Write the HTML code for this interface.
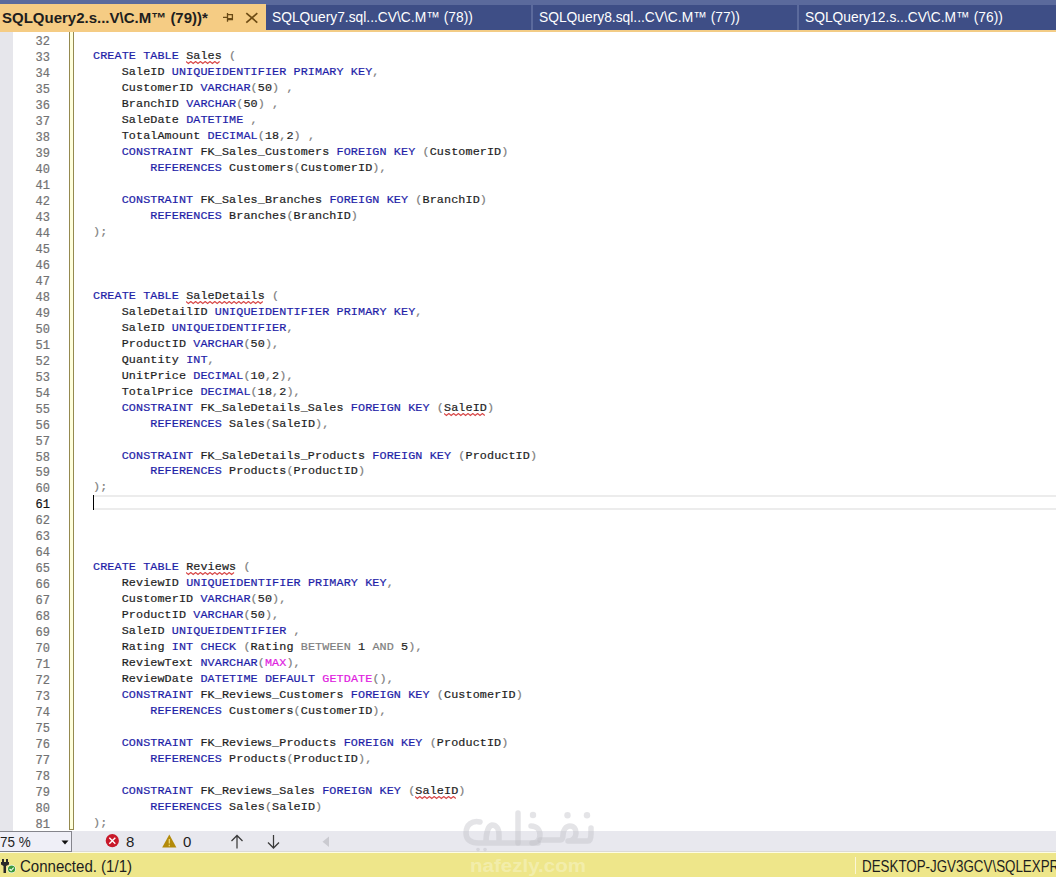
<!DOCTYPE html>
<html><head><meta charset="utf-8">
<style>
*{margin:0;padding:0;box-sizing:border-box}
html,body{width:1056px;height:877px;overflow:hidden;background:#fff}
body{position:relative;font-family:"Liberation Sans",sans-serif}
.abs{position:absolute}
#band{left:0;top:0;width:1056px;height:32px;background:#5B6A9C}
#uline{left:0;top:30px;width:1056px;height:2px;background:#F3CC86}
.tab{position:absolute;top:5px;height:25px;background:#3E4E86;color:#fff;white-space:nowrap;overflow:hidden}
.tab span{position:absolute;left:0;top:0;font-size:15px;line-height:25px;transform-origin:0 0;display:block}
#t1{left:0;top:4px;height:28px;width:266px;background:#F5CC84;color:#1E1E1E}
#t1 span{left:2px;top:1px;font-weight:bold;transform:scaleX(1.0)}
#t2{left:266px;width:265px}
#t3{left:533px;width:264px}
#t4{left:799px;width:257px}
#t2 span,#t3 span,#t4 span{left:6px;top:-1px;transform:scaleX(0.92)}
#editor{left:0;top:32px;width:1056px;height:799px;background:#fff;overflow:hidden}
#lmargin{left:0;top:0;width:13px;height:799px;background:#E6E6EB}
.ln,.cl{position:absolute;font-family:"Liberation Mono",monospace;font-size:11.75px;letter-spacing:0.11px;line-height:16px;height:16px;white-space:pre;-webkit-text-stroke:0.2px currentColor}
.ln{left:13px;width:37px;text-align:right;color:#727272;margin-top:2px;font-size:12px;letter-spacing:0}
.ln.cur{color:#111}
.cl{left:93px;color:#1E1E1E}
.cl b{font-weight:normal}
.k{color:#1E1EA8}
.g{color:#808080}
.f{color:#E020E0}
.cl i{font-style:normal}
#chg{left:69px;top:-2px;width:5px;height:800px;border:1px solid #958A50;background:#FFFFDC}
#curline{left:93px;width:963px;height:15px;border-top:2px solid #ECECEC;border-bottom:2px solid #ECECEC}
#caret{left:93px;width:1px;height:15px;background:#000}
#toolbar{left:0;top:831px;width:1056px;height:21px;background:#E8E8EE;border-bottom:1px solid #DCDAD6}
#zoom{left:-2px;top:831px;width:74px;height:21px;background:#EFEFF7;border:1px solid #85858C}
#zoom span{position:absolute;left:1px;top:1px;font-size:14px;line-height:18px;color:#1E1E1E;transform:scaleX(0.96);transform-origin:0 0}
#status{left:0;top:852px;width:1056px;height:25px;background:#EEE68A;border-top:1px solid #FDFDE6}
.st{position:absolute;font-size:15px;color:#1E1E1E;white-space:nowrap;line-height:18px}
</style></head><body>
<div id="band" class="abs"></div>
<div id="uline" class="abs"></div>
<div id="t1" class="tab"><span>SQLQuery2.s...V\C.M™ (79))*</span>
<svg class="abs" style="left:0;top:0" width="266" height="28">
 <g fill="none" stroke="#6A4A14" stroke-width="1.3">
  <path d="M223 13.4h4.5M227.5 9v8.8M228 10.6h4.4v5h-4.4" />
  <path d="M242.3 9.2l11 9.4M253.3 9.2l-11 9.4" stroke-width="1.7" stroke="#6E4C14" transform="translate(4,0)"/>
 </g>
 <path d="M228 14h5v2h-5z" fill="#6A4A14"/>
</svg>
</div>
<div id="t2" class="tab"><span>SQLQuery7.sql...CV\C.M™ (78))</span></div>
<div id="t3" class="tab"><span>SQLQuery8.sql...CV\C.M™ (77))</span></div>
<div id="t4" class="tab"><span>SQLQuery12.s...CV\C.M™ (76))</span></div>
<div id="editor" class="abs">
  <div id="lmargin" class="abs"></div>
  <div id="chg" class="abs"></div>
<div class="ln" style="top:0.02px">32</div>
<div class="ln" style="top:16.00px">33</div>
<div class="ln" style="top:31.98px">34</div>
<div class="ln" style="top:47.96px">35</div>
<div class="ln" style="top:63.94px">36</div>
<div class="ln" style="top:79.92px">37</div>
<div class="ln" style="top:95.90px">38</div>
<div class="ln" style="top:111.88px">39</div>
<div class="ln" style="top:127.86px">40</div>
<div class="ln" style="top:143.84px">41</div>
<div class="ln" style="top:159.82px">42</div>
<div class="ln" style="top:175.80px">43</div>
<div class="ln" style="top:191.78px">44</div>
<div class="ln" style="top:207.76px">45</div>
<div class="ln" style="top:223.74px">46</div>
<div class="ln" style="top:239.72px">47</div>
<div class="ln" style="top:255.70px">48</div>
<div class="ln" style="top:271.68px">49</div>
<div class="ln" style="top:287.66px">50</div>
<div class="ln" style="top:303.64px">51</div>
<div class="ln" style="top:319.62px">52</div>
<div class="ln" style="top:335.60px">53</div>
<div class="ln" style="top:351.58px">54</div>
<div class="ln" style="top:367.56px">55</div>
<div class="ln" style="top:383.54px">56</div>
<div class="ln" style="top:399.52px">57</div>
<div class="ln" style="top:415.50px">58</div>
<div class="ln" style="top:431.48px">59</div>
<div class="ln" style="top:447.46px">60</div>
<div class="ln cur" style="top:463.44px">61</div>
<div class="ln" style="top:479.42px">62</div>
<div class="ln" style="top:495.40px">63</div>
<div class="ln" style="top:511.38px">64</div>
<div class="ln" style="top:527.36px">65</div>
<div class="ln" style="top:543.34px">66</div>
<div class="ln" style="top:559.32px">67</div>
<div class="ln" style="top:575.30px">68</div>
<div class="ln" style="top:591.28px">69</div>
<div class="ln" style="top:607.26px">70</div>
<div class="ln" style="top:623.24px">71</div>
<div class="ln" style="top:639.22px">72</div>
<div class="ln" style="top:655.20px">73</div>
<div class="ln" style="top:671.18px">74</div>
<div class="ln" style="top:687.16px">75</div>
<div class="ln" style="top:703.14px">76</div>
<div class="ln" style="top:719.12px">77</div>
<div class="ln" style="top:735.10px">78</div>
<div class="ln" style="top:751.08px">79</div>
<div class="ln" style="top:767.06px">80</div>
<div class="ln" style="top:783.04px">81</div>
<svg class="abs" style="left:186.08px;top:29.00px" width="38" height="4"><polyline points="0.00,0.5 2.40,2.5 4.80,0.5 7.20,2.5 9.60,0.5 12.00,2.5 14.40,0.5 16.80,2.5 19.20,0.5 21.60,2.5 24.00,0.5 26.40,2.5 28.80,0.5 31.20,2.5 33.60,0.5" fill="none" stroke="#D84A4A" stroke-width="1.2"/></svg>
<svg class="abs" style="left:186.08px;top:268.70px" width="81" height="4"><polyline points="0.00,0.5 2.40,2.5 4.80,0.5 7.20,2.5 9.60,0.5 12.00,2.5 14.40,0.5 16.80,2.5 19.20,0.5 21.60,2.5 24.00,0.5 26.40,2.5 28.80,0.5 31.20,2.5 33.60,0.5 36.00,2.5 38.40,0.5 40.80,2.5 43.20,0.5 45.60,2.5 48.00,0.5 50.40,2.5 52.80,0.5 55.20,2.5 57.60,0.5 60.00,2.5 62.40,0.5 64.80,2.5 67.20,0.5 69.60,2.5 72.00,0.5 74.40,2.5 76.80,0.5" fill="none" stroke="#D84A4A" stroke-width="1.2"/></svg>
<svg class="abs" style="left:443.84px;top:380.56px" width="45" height="4"><polyline points="0.00,0.5 2.40,2.5 4.80,0.5 7.20,2.5 9.60,0.5 12.00,2.5 14.40,0.5 16.80,2.5 19.20,0.5 21.60,2.5 24.00,0.5 26.40,2.5 28.80,0.5 31.20,2.5 33.60,0.5 36.00,2.5 38.40,0.5 40.80,2.5" fill="none" stroke="#D84A4A" stroke-width="1.2"/></svg>
<svg class="abs" style="left:186.08px;top:540.36px" width="52" height="4"><polyline points="0.00,0.5 2.40,2.5 4.80,0.5 7.20,2.5 9.60,0.5 12.00,2.5 14.40,0.5 16.80,2.5 19.20,0.5 21.60,2.5 24.00,0.5 26.40,2.5 28.80,0.5 31.20,2.5 33.60,0.5 36.00,2.5 38.40,0.5 40.80,2.5 43.20,0.5 45.60,2.5 48.00,0.5" fill="none" stroke="#D84A4A" stroke-width="1.2"/></svg>
<svg class="abs" style="left:415.20px;top:764.08px" width="45" height="4"><polyline points="0.00,0.5 2.40,2.5 4.80,0.5 7.20,2.5 9.60,0.5 12.00,2.5 14.40,0.5 16.80,2.5 19.20,0.5 21.60,2.5 24.00,0.5 26.40,2.5 28.80,0.5 31.20,2.5 33.60,0.5 36.00,2.5 38.40,0.5 40.80,2.5" fill="none" stroke="#D84A4A" stroke-width="1.2"/></svg>
<div id="curline" class="abs" style="top:462.94px"></div>
<div id="caret" class="abs" style="top:463.44px"></div>
<div class="cl" style="top:16.00px"><b class="k">CREATE</b> <b class="k">TABLE</b> <i class="sq">Sales</i> <b class="g">(</b></div>
<div class="cl" style="top:31.98px">    <i>SaleID</i> <b class="k">UNIQUEIDENTIFIER</b> <b class="k">PRIMARY</b> <b class="k">KEY</b><b class="g">,</b></div>
<div class="cl" style="top:47.96px">    <i>CustomerID</i> <b class="k">VARCHAR</b><b class="g">(</b><i>50</i><b class="g">)</b> <b class="g">,</b></div>
<div class="cl" style="top:63.94px">    <i>BranchID</i> <b class="k">VARCHAR</b><b class="g">(</b><i>50</i><b class="g">)</b> <b class="g">,</b></div>
<div class="cl" style="top:79.92px">    <i>SaleDate</i> <b class="k">DATETIME</b> <b class="g">,</b></div>
<div class="cl" style="top:95.90px">    <i>TotalAmount</i> <b class="k">DECIMAL</b><b class="g">(</b><i>18</i><b class="g">,</b><i>2</i><b class="g">)</b> <b class="g">,</b></div>
<div class="cl" style="top:111.88px">    <b class="k">CONSTRAINT</b> <i>FK_Sales_Customers</i> <b class="k">FOREIGN</b> <b class="k">KEY</b> <b class="g">(</b><i>CustomerID</i><b class="g">)</b></div>
<div class="cl" style="top:127.86px">        <b class="k">REFERENCES</b> <i>Customers</i><b class="g">(</b><i>CustomerID</i><b class="g">)</b><b class="g">,</b></div>
<div class="cl" style="top:159.82px">    <b class="k">CONSTRAINT</b> <i>FK_Sales_Branches</i> <b class="k">FOREIGN</b> <b class="k">KEY</b> <b class="g">(</b><i>BranchID</i><b class="g">)</b></div>
<div class="cl" style="top:175.80px">        <b class="k">REFERENCES</b> <i>Branches</i><b class="g">(</b><i>BranchID</i><b class="g">)</b></div>
<div class="cl" style="top:191.78px"><b class="g">)</b><b class="g">;</b></div>
<div class="cl" style="top:255.70px"><b class="k">CREATE</b> <b class="k">TABLE</b> <i class="sq">SaleDetails</i> <b class="g">(</b></div>
<div class="cl" style="top:271.68px">    <i>SaleDetailID</i> <b class="k">UNIQUEIDENTIFIER</b> <b class="k">PRIMARY</b> <b class="k">KEY</b><b class="g">,</b></div>
<div class="cl" style="top:287.66px">    <i>SaleID</i> <b class="k">UNIQUEIDENTIFIER</b><b class="g">,</b></div>
<div class="cl" style="top:303.64px">    <i>ProductID</i> <b class="k">VARCHAR</b><b class="g">(</b><i>50</i><b class="g">)</b><b class="g">,</b></div>
<div class="cl" style="top:319.62px">    <i>Quantity</i> <b class="k">INT</b><b class="g">,</b></div>
<div class="cl" style="top:335.60px">    <i>UnitPrice</i> <b class="k">DECIMAL</b><b class="g">(</b><i>10</i><b class="g">,</b><i>2</i><b class="g">)</b><b class="g">,</b></div>
<div class="cl" style="top:351.58px">    <i>TotalPrice</i> <b class="k">DECIMAL</b><b class="g">(</b><i>18</i><b class="g">,</b><i>2</i><b class="g">)</b><b class="g">,</b></div>
<div class="cl" style="top:367.56px">    <b class="k">CONSTRAINT</b> <i>FK_SaleDetails_Sales</i> <b class="k">FOREIGN</b> <b class="k">KEY</b> <b class="g">(</b><i class="sq">SaleID</i><b class="g">)</b></div>
<div class="cl" style="top:383.54px">        <b class="k">REFERENCES</b> <i>Sales</i><b class="g">(</b><i>SaleID</i><b class="g">)</b><b class="g">,</b></div>
<div class="cl" style="top:415.50px">    <b class="k">CONSTRAINT</b> <i>FK_SaleDetails_Products</i> <b class="k">FOREIGN</b> <b class="k">KEY</b> <b class="g">(</b><i>ProductID</i><b class="g">)</b></div>
<div class="cl" style="top:431.48px">        <b class="k">REFERENCES</b> <i>Products</i><b class="g">(</b><i>ProductID</i><b class="g">)</b></div>
<div class="cl" style="top:447.46px"><b class="g">)</b><b class="g">;</b></div>
<div class="cl" style="top:527.36px"><b class="k">CREATE</b> <b class="k">TABLE</b> <i class="sq">Reviews</i> <b class="g">(</b></div>
<div class="cl" style="top:543.34px">    <i>ReviewID</i> <b class="k">UNIQUEIDENTIFIER</b> <b class="k">PRIMARY</b> <b class="k">KEY</b><b class="g">,</b></div>
<div class="cl" style="top:559.32px">    <i>CustomerID</i> <b class="k">VARCHAR</b><b class="g">(</b><i>50</i><b class="g">)</b><b class="g">,</b></div>
<div class="cl" style="top:575.30px">    <i>ProductID</i> <b class="k">VARCHAR</b><b class="g">(</b><i>50</i><b class="g">)</b><b class="g">,</b></div>
<div class="cl" style="top:591.28px">    <i>SaleID</i> <b class="k">UNIQUEIDENTIFIER</b> <b class="g">,</b></div>
<div class="cl" style="top:607.26px">    <i>Rating</i> <b class="k">INT</b> <b class="k">CHECK</b> <b class="g">(</b><i>Rating</i> <b class="g">BETWEEN</b> <i>1</i> <b class="g">AND</b> <i>5</i><b class="g">)</b><b class="g">,</b></div>
<div class="cl" style="top:623.24px">    <i>ReviewText</i> <b class="k">NVARCHAR</b><b class="g">(</b><b class="f">MAX</b><b class="g">)</b><b class="g">,</b></div>
<div class="cl" style="top:639.22px">    <i>ReviewDate</i> <b class="k">DATETIME</b> <b class="k">DEFAULT</b> <b class="f">GETDATE</b><b class="g">(</b><b class="g">)</b><b class="g">,</b></div>
<div class="cl" style="top:655.20px">    <b class="k">CONSTRAINT</b> <i>FK_Reviews_Customers</i> <b class="k">FOREIGN</b> <b class="k">KEY</b> <b class="g">(</b><i>CustomerID</i><b class="g">)</b></div>
<div class="cl" style="top:671.18px">        <b class="k">REFERENCES</b> <i>Customers</i><b class="g">(</b><i>CustomerID</i><b class="g">)</b><b class="g">,</b></div>
<div class="cl" style="top:703.14px">    <b class="k">CONSTRAINT</b> <i>FK_Reviews_Products</i> <b class="k">FOREIGN</b> <b class="k">KEY</b> <b class="g">(</b><i>ProductID</i><b class="g">)</b></div>
<div class="cl" style="top:719.12px">        <b class="k">REFERENCES</b> <i>Products</i><b class="g">(</b><i>ProductID</i><b class="g">)</b><b class="g">,</b></div>
<div class="cl" style="top:751.08px">    <b class="k">CONSTRAINT</b> <i>FK_Reviews_Sales</i> <b class="k">FOREIGN</b> <b class="k">KEY</b> <b class="g">(</b><i class="sq">SaleID</i><b class="g">)</b></div>
<div class="cl" style="top:767.06px">        <b class="k">REFERENCES</b> <i>Sales</i><b class="g">(</b><i>SaleID</i><b class="g">)</b></div>
<div class="cl" style="top:783.04px"><b class="g">)</b><b class="g">;</b></div>
</div>
<div id="toolbar" class="abs"></div>
<div id="zoom" class="abs"><span>75 %</span>
 <svg class="abs" style="left:0;top:0" width="74" height="21"><path d="M62.5 8.5h7l-3.5 4z" fill="#111"/></svg>
</div>
<svg class="abs" style="left:0;top:831px" width="400" height="21">
 <circle cx="112.3" cy="9.7" r="6.6" fill="#C8192A"/>
 <path d="M109.3 6.7l6 6M115.3 6.7l-6 6" stroke="#fff" stroke-width="1.4"/>
 <path d="M169.3 3.6l7.1 13h-14.2z" fill="#B38A0A"/>
 <path d="M169.3 8v4.6M169.3 13.8v1.4" stroke="#F0DC7C" stroke-width="1.2"/>
 <path d="M237 17.5V4.5M231.5 10l5.5-5.5 5.5 5.5" stroke="#3A3A3A" stroke-width="1.25" fill="none"/>
 <path d="M273.5 4v13M268 11.5l5.5 5.5 5.5-5.5" stroke="#3A3A3A" stroke-width="1.25" fill="none"/>
 <path d="M329 5.5v10.5l-6.5-5.25z" fill="#CACAD0"/>
</svg>
<div class="st" style="left:126px;top:833px;font-size:15px">8</div>
<div class="st" style="left:183px;top:833px;font-size:15px">0</div>
<div id="status" class="abs"></div>
<svg class="abs" style="left:0;top:852px" width="20" height="25">
 <path d="M2 7h2v3H2zM6 7h2v3H6z" fill="#2A2A2A"/>
 <path d="M1 10h8v2.5L6 14v7H3.5v-7L1 12.5z" fill="#2A2A2A"/>
 <circle cx="11.6" cy="17" r="4.2" fill="#fff"/>
 <circle cx="11.6" cy="17" r="3.6" fill="#3A9A3A"/>
 <path d="M9.6 17l1.5 1.5 2.6-2.8" stroke="#fff" stroke-width="1.1" fill="none"/>
</svg>
<div class="st" style="left:20px;top:858px;font-size:16px;transform:scaleX(0.94);transform-origin:0 0">Connected. (1/1)</div>
<div class="abs" style="left:855px;top:857px;width:1px;height:17px;background:#FBF6D8"></div>
<div class="st" style="left:862px;top:858px;font-size:16px;transform:scaleX(0.835);transform-origin:0 0">DESKTOP-JGV3GCV\SQLEXPR</div>
<svg class="abs" style="left:0;top:0;pointer-events:none" width="1056" height="877">
 <g fill="none" stroke="rgba(190,190,198,0.42)" stroke-width="5.5" stroke-linecap="round" stroke-linejoin="round">
  <path d="M480 822c-8-2-14 3-14 11 0 7 5 10 12 10h60M486 843c0-10 2-17 6-18 4 0 7 3 7 10v8"/>
  <path d="M518 813v30"/>
  <path d="M531 826c6 0 9 4 9 9 0 4-2 8-8 8"/>
  <path d="M540 840h20c2 0 3-2 3-5 0-5 3-9 7-9 4 0 6 3 6 7s-3 8-8 8M570 841h18c2 0 3-3 3-7v-6"/>
 </g>
 <g fill="rgba(190,190,198,0.42)">
  <circle cx="533" cy="815" r="3.2"/><circle cx="567.5" cy="815.3" r="3.2"/><circle cx="587" cy="815.3" r="3.2"/>
  <circle cx="478" cy="849.6" r="1.8"/><circle cx="485" cy="849.6" r="1.8"/>
 </g>
 <text x="470" y="872" font-family="Liberation Sans" font-weight="bold" font-size="18" fill="rgba(255,255,255,0.3)" textLength="116" lengthAdjust="spacingAndGlyphs">nafezly.com</text>
</svg>
</body></html>
